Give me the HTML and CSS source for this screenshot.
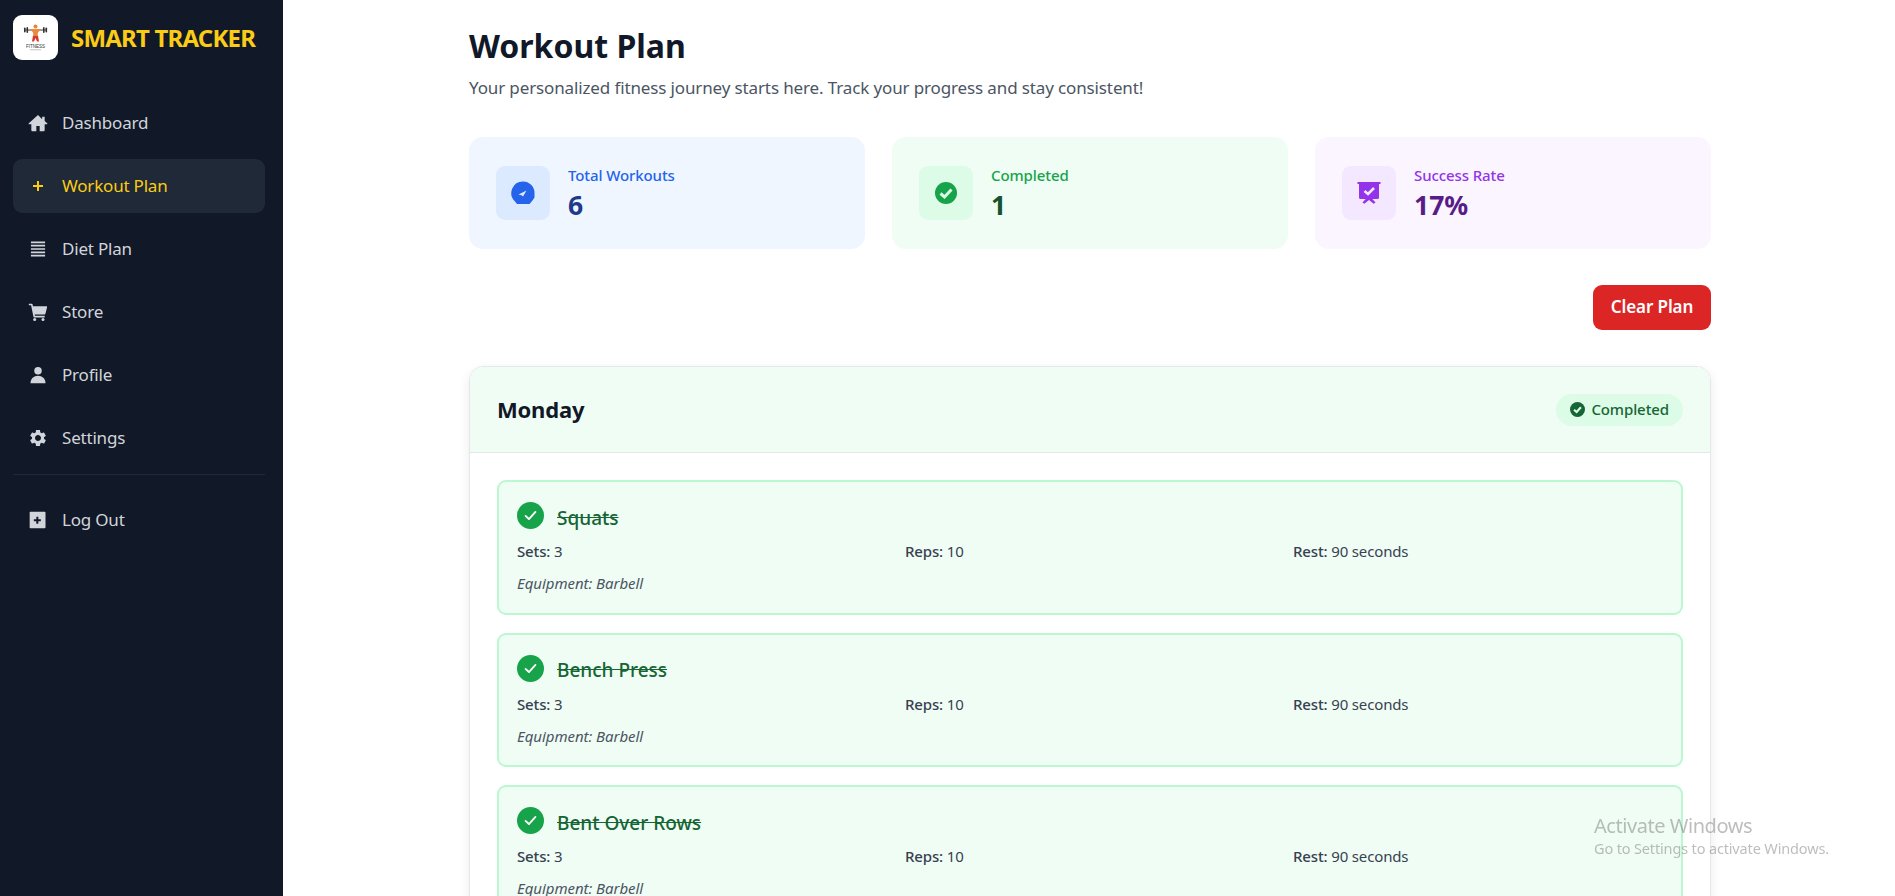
FILE: index.html
```html
<!DOCTYPE html>
<html lang="en">
<head>
  <meta charset="UTF-8">
  <meta name="viewport" content="width=device-width, initial-scale=1.0">
  <title>Smart Tracker - Workout Plan</title>
  <link rel="stylesheet" href="styles.css">
</head>
<body>
  <aside class="sidebar">
    <div class="brand">
      <div class="brand-logo">
        <svg viewBox="0 0 45 45" width="45" height="45">
          <rect x="11" y="14.500" width="23" height="1" fill="#444"/>
          <rect x="11" y="12.500" width="1.600" height="5" rx=".8" fill="#333"/>
          <rect x="13.500" y="12" width="1.600" height="6" rx=".8" fill="#333"/>
          <rect x="30" y="12" width="1.600" height="6" rx=".8" fill="#333"/>
          <rect x="32.500" y="12.500" width="1.600" height="5" rx=".8" fill="#333"/>
          <circle cx="22.500" cy="11.500" r="2" fill="#e8853a"/>
          <path d="M17 14h11l-3 3.500-.4 3h-4.200l-.4-3z" fill="#ec8b3c"/>
          <path d="M20 20.500h5l1 6h-2l-1.500-3.500-1.500 3.500h-2z" fill="#d9392b"/>
          <text x="22.500" y="33" text-anchor="middle" class="logo-text">FITNESS</text>
          <rect x="17" y="34.500" width="11" height="0.700" fill="#aaa"/>
        </svg>
      </div>
      <span class="brand-name">SMART TRACKER</span>
    </div>

    <nav class="nav">
      <a class="nav-item" href="#">
        <svg class="nav-icon" viewBox="0 0 24 24"><path fill="currentColor" d="M12 2.500 1 12.300c-.5.500-.2 1.200.5 1.200H4v7c0 .8.600 1.500 1.400 1.500H10v-6.500h4V22h4.600c.8 0 1.400-.7 1.400-1.500v-7h2.500c.7 0 1-.7.500-1.200l-3-2.700V4.500h-3v2.900z"/></svg>
        Dashboard
      </a>
      <a class="nav-item active" href="#">
        <svg class="nav-icon" viewBox="0 0 24 24"><path fill="none" stroke="currentColor" stroke-width="2.400" d="M12 6v12M6 12h12"/></svg>
        Workout Plan
      </a>
      <a class="nav-item" href="#">
        <svg class="nav-icon" viewBox="0 0 24 24"><path fill="none" stroke="currentColor" stroke-width="2" d="M3.500 4h17M3.500 8h17M3.500 12h17M3.500 16h17M3.500 20h17"/></svg>
        Diet Plan
      </a>
      <a class="nav-item" href="#">
        <svg class="nav-icon" viewBox="0 0 24 24"><path fill="currentColor" d="M1 2h3.500c.5 0 .9.300 1 .8L5.900 5H22c.6 0 1 .6.900 1.200l-2 8c-.1.500-.5.800-1 .8H8l.3 1.500H20v2H7.500c-.5 0-.9-.3-1-.8L3.700 4H1z"/><circle cx="8" cy="21" r="1.800" fill="currentColor"/><circle cx="18" cy="21" r="1.800" fill="currentColor"/></svg>
        Store
      </a>
      <a class="nav-item" href="#">
        <svg class="nav-icon" viewBox="0 0 24 24"><circle cx="12" cy="7" r="4.500" fill="currentColor"/><path fill="currentColor" d="M3 22c0-5.500 4-9 9-9s9 3.500 9 9z"/></svg>
        Profile
      </a>
      <a class="nav-item" href="#">
        <svg class="nav-icon" viewBox="0 0 24 24"><path fill="currentColor" fill-rule="evenodd" d="M19.140 12.940c.04-.3.06-.61.06-.94 0-.32-.02-.64-.07-.94l2.030-1.580c.18-.14.23-.41.12-.61l-1.920-3.320c-.12-.22-.37-.29-.59-.22l-2.390.96c-.5-.38-1.030-.7-1.620-.94l-.36-2.540c-.04-.24-.24-.41-.48-.41h-3.840c-.24 0-.43.17-.47.41l-.36 2.540c-.59.24-1.130.57-1.620.94l-2.390-.96c-.22-.08-.47 0-.59.22L2.740 8.870c-.12.21-.08.47.12.61l2.030 1.580c-.05.3-.09.63-.09.94s.02.64.07.94l-2.030 1.580c-.18.14-.23.41-.12.61l1.920 3.320c.12.22.37.29.59.22l2.390-.96c.5.38 1.030.7 1.620.94l.36 2.540c.05.24.24.41.48.41h3.840c.24 0 .44-.17.47-.41l.36-2.540c.59-.24 1.130-.56 1.620-.94l2.390.96c.22.08.47 0 .59-.22l1.920-3.320c.12-.22.07-.47-.12-.61l-2.010-1.580zM12 15.600c-1.980 0-3.600-1.620-3.600-3.600s1.620-3.600 3.600-3.600 3.600 1.620 3.600 3.600-1.620 3.600-3.600 3.600z"/></svg>
        Settings
      </a>
      <div class="nav-divider"></div>
      <a class="nav-item" href="#">
        <svg class="nav-icon" viewBox="0 0 24 24"><path fill="currentColor" fill-rule="evenodd" d="M3 2h17a1 1 0 0 1 1 1v18a1 1 0 0 1-1 1H3a1 1 0 0 1-1-1V3a1 1 0 0 1 1-1zm7 6v3H7v2.400h3v3h2.400v-3h3V11h-3V8z"/></svg>
        Log Out
      </a>
    </nav>
  </aside>

  <main class="main">
    <div class="content">
      <h1>Workout Plan</h1>
      <p class="subtitle">Your personalized fitness journey starts here. Track your progress and stay consistent!</p>

      <section class="stats">
        <div class="stat stat-blue">
          <div class="stat-icon">
            <svg viewBox="0 0 24 24" width="24" height="24"><path fill="#2563eb" d="M12 .5A11.500 11.500 0 0 1 23.500 12v4.500l-2 3-3 3.500H6l-2.200-2.800A11.500 11.500 0 0 1 12 .5z"/><path fill="#dbeafe" d="M7.500 13.500 15.500 9.500 12 15.500l-1.500-1.300z"/></svg>
          </div>
          <div>
            <div class="stat-label">Total Workouts</div>
            <div class="stat-value">6</div>
          </div>
        </div>
        <div class="stat stat-green">
          <div class="stat-icon">
            <svg viewBox="0 0 24 24" width="24" height="24"><circle cx="12" cy="12" r="11" fill="#16a34a"/><path fill="none" stroke="#dcfce7" stroke-width="3" d="m6.500 12.500 4 3.500 7-7.500"/></svg>
          </div>
          <div>
            <div class="stat-label">Completed</div>
            <div class="stat-value">1</div>
          </div>
        </div>
        <div class="stat stat-purple">
          <div class="stat-icon">
            <svg viewBox="0 0 24 24" width="24" height="24"><path fill="#9333ea" d="M.5 1h23v2h-1.500v13.500a1.500 1.500 0 0 1-1.500 1.500h-17A1.500 1.500 0 0 1 2 16.500V3H.5z"/><path fill="#9333ea" d="M9.500 17l-4 4.500 1.800 1.200L12 19l4.700 3.700 1.800-1.200-4-4.500z"/><path fill="none" stroke="#f3e8ff" stroke-width="2.600" d="m7.500 10 3.500 3 6-6"/></svg>
          </div>
          <div>
            <div class="stat-label">Success Rate</div>
            <div class="stat-value">17%</div>
          </div>
        </div>
      </section>

      <div class="actions">
        <button class="clear-btn" type="button">Clear Plan</button>
      </div>

      <section class="day-card">
        <header class="day-header">
          <h2>Monday</h2>
          <span class="badge">
            <svg viewBox="0 0 24 24" width="15" height="15"><circle cx="12" cy="12" r="12" fill="#166534"/><path fill="none" stroke="#dcfce7" stroke-width="3.400" d="m6.500 12.500 4 3.500 7-7.500"/></svg>
            Completed
          </span>
        </header>
        <div class="day-body">
          <div class="exercise">
            <div class="exercise-title">
              <span class="check"><svg viewBox="0 0 24 24" width="17" height="17"><path fill="none" stroke="#fff" stroke-width="2.600" stroke-linecap="round" stroke-linejoin="round" d="m5 12.500 4.800 4.500L19 7"/></svg></span>
              <span class="exercise-name">Squats</span>
            </div>
            <div class="exercise-meta">
              <span><b>Sets:</b> 3</span>
              <span><b>Reps:</b> 10</span>
              <span><b>Rest:</b> 90 seconds</span>
            </div>
            <div class="equipment">Equipment: Barbell</div>
          </div>
          <div class="exercise">
            <div class="exercise-title">
              <span class="check"><svg viewBox="0 0 24 24" width="17" height="17"><path fill="none" stroke="#fff" stroke-width="2.600" stroke-linecap="round" stroke-linejoin="round" d="m5 12.500 4.800 4.500L19 7"/></svg></span>
              <span class="exercise-name">Bench Press</span>
            </div>
            <div class="exercise-meta">
              <span><b>Sets:</b> 3</span>
              <span><b>Reps:</b> 10</span>
              <span><b>Rest:</b> 90 seconds</span>
            </div>
            <div class="equipment">Equipment: Barbell</div>
          </div>
          <div class="exercise">
            <div class="exercise-title">
              <span class="check"><svg viewBox="0 0 24 24" width="17" height="17"><path fill="none" stroke="#fff" stroke-width="2.600" stroke-linecap="round" stroke-linejoin="round" d="m5 12.500 4.800 4.500L19 7"/></svg></span>
              <span class="exercise-name">Bent Over Rows</span>
            </div>
            <div class="exercise-meta">
              <span><b>Sets:</b> 3</span>
              <span><b>Reps:</b> 10</span>
              <span><b>Rest:</b> 90 seconds</span>
            </div>
            <div class="equipment">Equipment: Barbell</div>
          </div>
        </div>
      </section>
    </div>
  </main>

  <div class="watermark">
    <div class="watermark-title">Activate Windows</div>
    <div class="watermark-sub">Go to Settings to activate Windows.</div>
  </div>
</body>
</html>
```

FILE: styles.css
```css
* {
  box-sizing: border-box;
}
html, body {
  height: 100%;
}
body {
  margin: 0;
  display: flex;
  overflow: hidden;
  background: #fff;
  color: #111827;
  font-family: "Noto Sans", "Open Sans", sans-serif;
}

/* sidebar */
.sidebar {
  width: 283px;
  flex-shrink: 0;
  height: 100%;
  background: #111827;
  padding: 15px 18px 0 13px;
}
.brand {
  display: flex;
  align-items: center;
  gap: 13px;
}
.brand-logo {
  width: 45px;
  height: 45px;
  background: #fff;
  border-radius: 9px;
  overflow: hidden;
}
.logo-text {
  font-family: "Liberation Sans", sans-serif;
  font-size: 4.500px;
  fill: #333;
}
.brand-name {
  margin-bottom: 1px;
  color: #facc15;
  font-size: 24px;
  font-weight: 700;
  letter-spacing: -0.8px;
  white-space: nowrap;
}
.nav {
  margin-top: 36px;
}
.nav-item {
  display: flex;
  align-items: center;
  gap: 14px;
  height: 54px;
  margin-bottom: 9px;
  padding: 0 16px 1px 15px;
  border-radius: 9px;
  color: #d1d5db;
  font-size: 17px;
  letter-spacing: -0.2px;
  text-decoration: none;
}
.nav-item.active {
  background: #1f2937;
  color: #facc15;
}
.nav-icon {
  width: 20px;
  height: 20px;
  flex-shrink: 0;
}
.nav-divider {
  height: 1px;
  background: #1f2937;
  margin: 8px 0 18px;
}

/* main area */
.main {
  flex: 1;
  min-width: 0;
  padding-left: 186px;
}
.content {
  width: 1242px;
  padding-top: 24px;
}
h1 {
  margin: 0;
  font-size: 32px;
  line-height: 44px;
  font-weight: 700;
}
.subtitle {
  margin: 8px 0 0;
  color: #4b5563;
  font-size: 17px;
  line-height: 24px;
  letter-spacing: -0.13px;
}
.stats {
  display: grid;
  grid-template-columns: repeat(3, 1fr);
  gap: 27px;
  margin-top: 37px;
}
.stat {
  display: flex;
  align-items: center;
  gap: 18px;
  height: 112px;
  padding: 0 27px;
  border-radius: 14px;
}
.stat-icon {
  display: flex;
  align-items: center;
  justify-content: center;
  width: 54px;
  height: 54px;
  border-radius: 9px;
}
.stat-label {
  font-size: 15px;
  line-height: 20px;
  font-weight: 500;
  letter-spacing: -0.1px;
}
.stat-value {
  margin-top: 3px;
  font-size: 26.500px;
  line-height: 34px;
  font-weight: 700;
}
.stat-blue { background: #eff6ff; }
.stat-blue .stat-icon { background: #dbeafe; }
.stat-blue .stat-label { color: #2563eb; }
.stat-blue .stat-value { color: #1e3a8a; }
.stat-green { background: #f0fdf4; }
.stat-green .stat-icon { background: #dcfce7; }
.stat-green .stat-label { color: #16a34a; }
.stat-green .stat-value { color: #14532d; }
.stat-purple { background: #faf5ff; }
.stat-purple .stat-icon { background: #f3e8ff; }
.stat-purple .stat-label { color: #9333ea; }
.stat-purple .stat-value { color: #581c87; }

.actions {
  display: flex;
  justify-content: flex-end;
  margin-top: 36px;
}
.clear-btn {
  height: 45px;
  width: 118px;
  padding: 0 0 2px;
  border: none;
  border-radius: 9px;
  background: #dc2626;
  color: #fff;
  font-family: inherit;
  font-size: 17px;
  font-weight: 600;
  letter-spacing: -0.1px;
}

/* day card */
.day-card {
  margin-top: 36px;
  border: 1px solid #e5e7eb;
  border-radius: 14px;
  box-shadow: 0 4px 12px rgba(0,0,0,0.08);
  overflow: hidden;
}
.day-header {
  display: flex;
  align-items: center;
  justify-content: space-between;
  height: 86px;
  padding: 0 27px;
  background: #f0fdf4;
  border-bottom: 1px solid #e5e7eb;
}
h2 {
  margin: 0 0 2px;
  font-size: 22px;
  font-weight: 700;
  letter-spacing: -0.2px;
}
.badge {
  display: flex;
  align-items: center;
  gap: 6px;
  height: 32px;
  padding: 0 14px 1px;
  border-radius: 16px;
  background: #dcfce7;
  color: #166534;
  font-size: 15px;
  font-weight: 500;
  letter-spacing: -0.1px;
}
.day-body {
  display: flex;
  flex-direction: column;
  gap: 18px;
  padding: 27px 27px 0;
}
.exercise {
  height: 134.500px;
  padding: 20px 18px 0;
  background: #f0fdf4;
  border: 2px solid #bbf7d0;
  border-radius: 9px;
}
.exercise-title {
  display: flex;
  align-items: center;
  gap: 13px;
  height: 27px;
}
.check {
  display: flex;
  align-items: center;
  justify-content: center;
  width: 27px;
  height: 27px;
  border-radius: 50%;
  background: #16a34a;
}
.exercise-name {
  margin-top: 4px;
  color: #166534;
  font-size: 19px;
  font-weight: 500;
  text-decoration: line-through;
}
.exercise-meta {
  display: grid;
  grid-template-columns: repeat(3, 1fr);
  gap: 18px;
  margin-top: 11px;
  color: #374151;
  font-size: 15px;
  line-height: 22px;
  letter-spacing: -0.15px;
}
.exercise-meta b {
  font-weight: 500;
}
.equipment {
  margin-top: 10px;
  color: #4b5563;
  font-size: 15px;
  line-height: 22px;
  font-style: italic;
  letter-spacing: -0.05px;
}

/* windows activation notice lies over the page */
.watermark {
  position: fixed;
  left: 1594px;
  top: 812px;
  color: rgba(90, 90, 90, 0.4);
  pointer-events: none;
  white-space: nowrap;
}
.watermark-title {
  font-size: 20px;
  line-height: 27px;
  letter-spacing: -0.45px;
}
.watermark-sub {
  font-size: 14.500px;
  line-height: 18px;
  letter-spacing: -0.15px;
}
```
